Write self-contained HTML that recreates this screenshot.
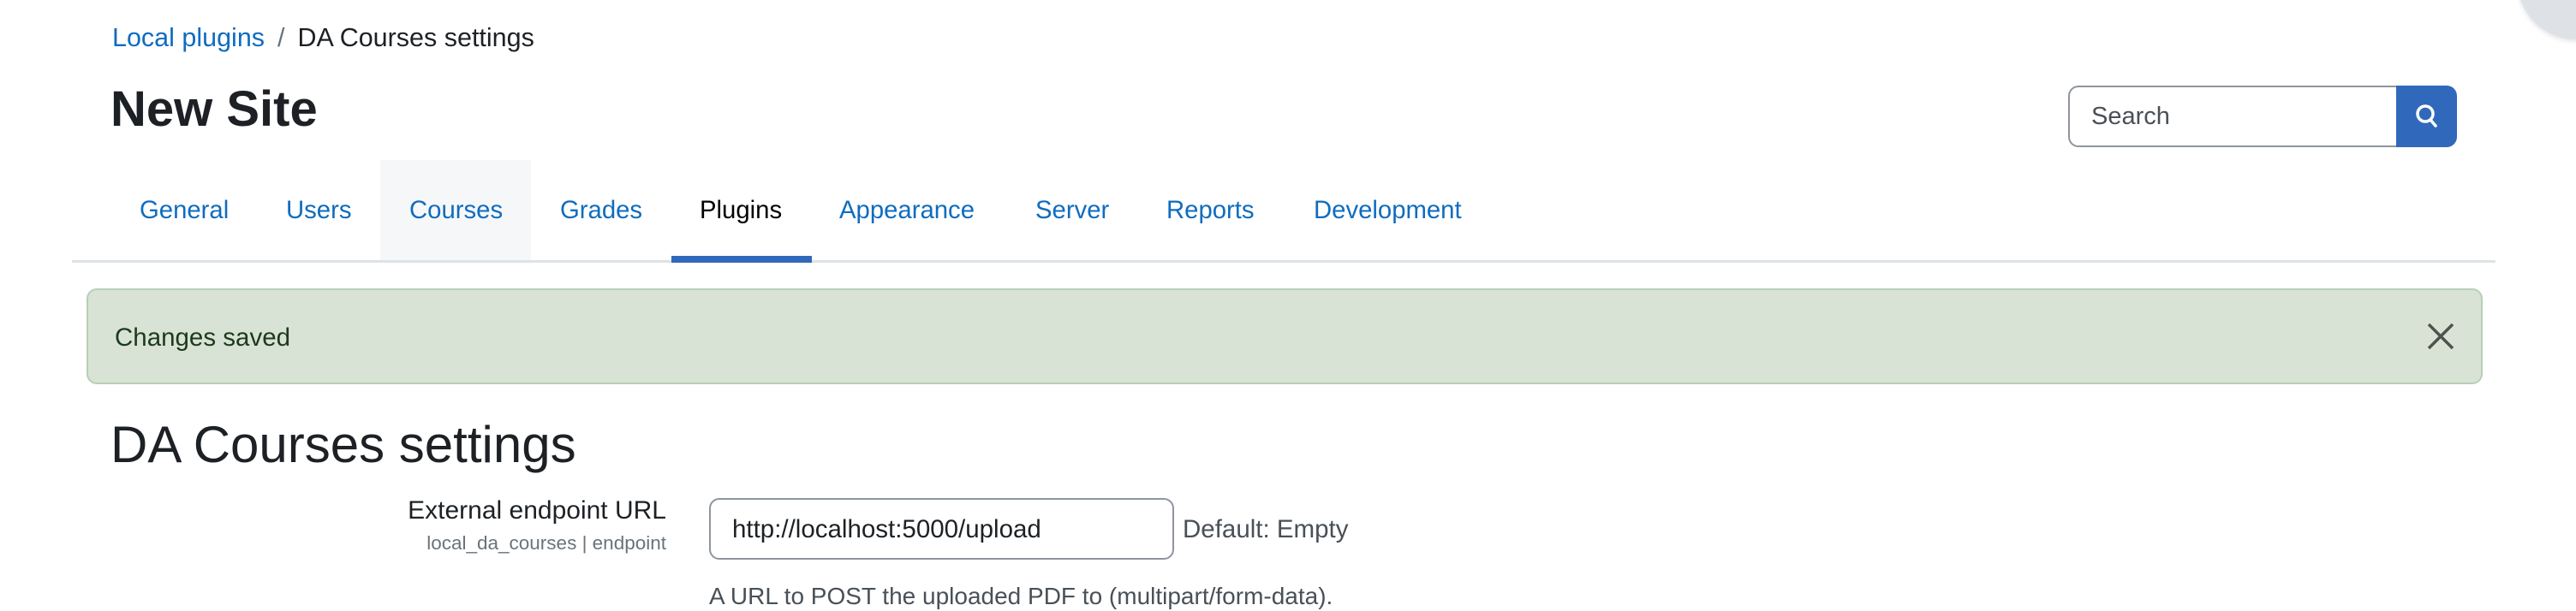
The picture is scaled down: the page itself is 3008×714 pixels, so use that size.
<!DOCTYPE html>
<html><head><meta charset="utf-8"><style>
body{margin:0;width:3008px;height:695px;overflow:hidden;background:#fff;font-family:"Liberation Sans",sans-serif;position:relative;color:#1d2125}
.a{position:absolute;white-space:nowrap}
.l{color:#0f6cbf}
.tab{position:absolute;top:229px;font-size:29.3px;color:#0f6cbf;line-height:34px}
</style></head><body>
<div class="a" style="left:2940px;top:-90px;width:136px;height:136px;border-radius:50%;background:#dee2e6;box-shadow:0 2px 6px rgba(0,0,0,.12)"></div>
<div class="a" style="left:131px;top:27px;font-size:30.5px;line-height:34px"><span class="l">Local plugins</span><span style="color:#6a737b;margin:0 15px">/</span>DA Courses settings</div>
<div class="a" style="left:129px;top:95px;font-size:58px;font-weight:bold;line-height:66px">New Site</div>
<div class="a" style="left:2415px;top:100px;width:381px;height:68px;border:2px solid #8f959e;border-right:none;border-radius:12px 0 0 12px"></div>
<div class="a" style="left:2442px;top:119px;font-size:29px;color:#495057;line-height:34px">Search</div>
<div class="a" style="left:2798px;top:100px;width:71px;height:72px;background:#3069bb;border-radius:0 12px 12px 0"></div>
<svg class="a" style="left:2815px;top:117px" width="38" height="38" viewBox="0 0 38 38"><circle cx="17" cy="16" r="9" fill="none" stroke="#fff" stroke-width="3.5"/><line x1="23" y1="23" x2="29" y2="30" stroke="#fff" stroke-width="3.5" stroke-linecap="round"/></svg>
<div class="a" style="left:444px;top:187px;width:176px;height:118px;background:#f6f7f9"></div>
<div class="a" style="left:84px;top:304px;width:2830px;height:3px;background:#dee2e6"></div>
<div class="a" style="left:784px;top:299px;width:164px;height:8px;background:#3069bb"></div>
<div class="tab" style="left:163px">General</div>
<div class="tab" style="left:334px">Users</div>
<div class="tab" style="left:478px">Courses</div>
<div class="tab" style="left:654px">Grades</div>
<div class="tab" style="left:817px;color:#000">Plugins</div>
<div class="tab" style="left:980px">Appearance</div>
<div class="tab" style="left:1209px">Server</div>
<div class="tab" style="left:1362px">Reports</div>
<div class="tab" style="left:1534px">Development</div>
<div class="a" style="left:101px;top:337px;width:2794px;height:108px;background:#d8e3d6;border:2px solid #b8cfb5;border-radius:12px"></div>
<div class="a" style="left:134px;top:378px;font-size:29.5px;color:#1c3a1c;line-height:34px">Changes saved</div>
<svg class="a" style="left:2833px;top:376px" width="34" height="34" viewBox="0 0 34 34"><path d="M3 3L31 31M31 3L3 31" stroke="#4d524d" stroke-width="3.5"/></svg>
<div class="a" style="left:129px;top:487px;font-size:60px;line-height:66px">DA Courses settings</div>
<div class="a" style="right:2230px;top:580px;font-size:30px;line-height:34px;text-align:right">External endpoint URL</div>
<div class="a" style="right:2230px;top:622px;font-size:22.5px;color:#6a737b;line-height:26px">local_da_courses | endpoint</div>
<div class="a" style="left:828px;top:582px;width:539px;height:68px;border:2px solid #8f959e;border-radius:12px"></div>
<div class="a" style="left:855px;top:602px;font-size:29.5px;line-height:34px">http://localhost:5000/upload</div>
<div class="a" style="left:1381px;top:602px;font-size:29.5px;color:#495057;line-height:34px">Default: Empty</div>
<div class="a" style="left:828px;top:680px;font-size:28px;color:#495057;line-height:34px">A URL to POST the uploaded PDF to (multipart/form-data).</div>
</body></html>
